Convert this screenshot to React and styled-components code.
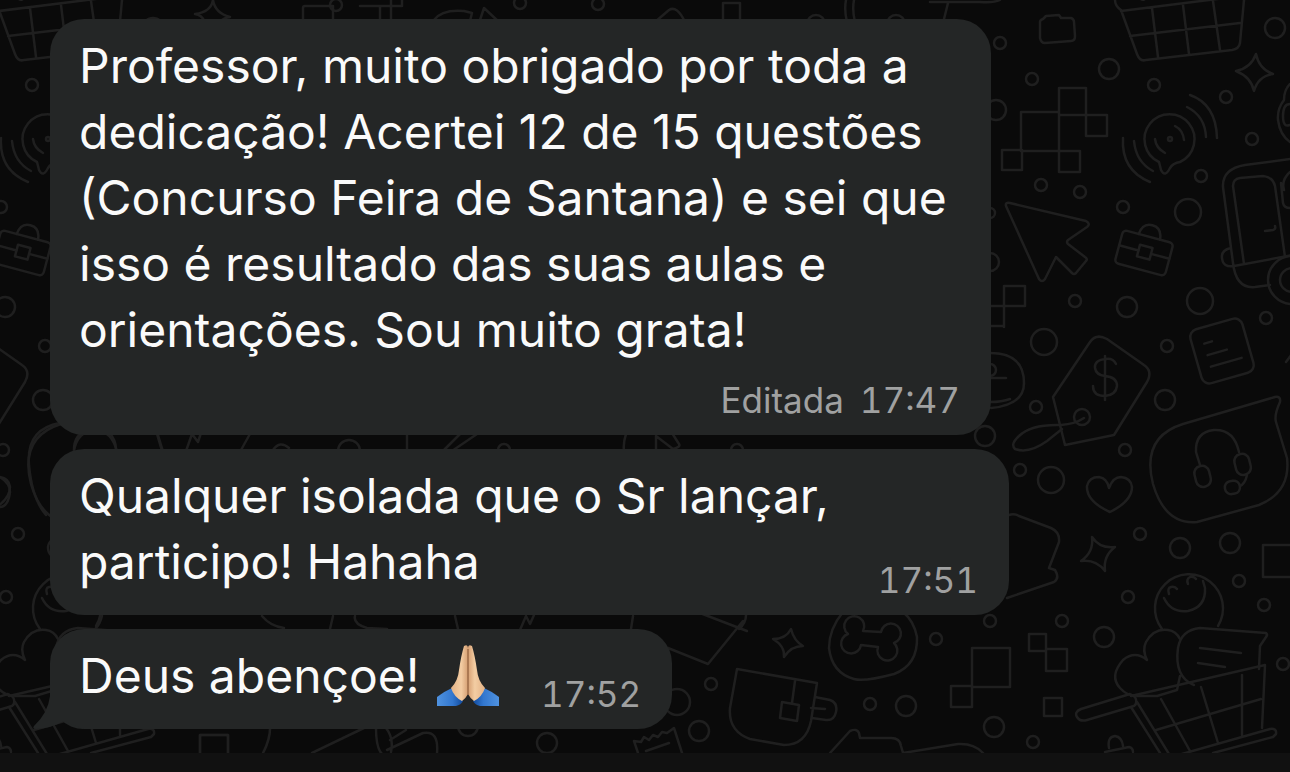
import styled, { createGlobalStyle } from "styled-components";

const GlobalStyle = createGlobalStyle`
  * {
    box-sizing: border-box;
  }

  body {
    margin: 0;
    background: #0a0a0a;
    font-family: Inter, "Liberation Sans", sans-serif;
  }
`;

const Page = styled.div`
  display: flex;
  flex-direction: column;
  min-height: 100vh;
`;

const Chat = styled.main`
  position: relative;
  flex: 1;
  padding: 19px 16px 23px 50px;
  overflow: hidden;
`;

const Wallpaper = styled.svg`
  position: absolute;
  top: 0;
  left: 0;
  fill: none;
  stroke: #1f1f1f;
  stroke-width: 2.5;
  stroke-linecap: round;
  stroke-linejoin: round;
`;

const MessageList = styled.ol`
  position: relative;
  display: flex;
  flex-direction: column;
  align-items: flex-start;
  gap: 14px;
  margin: 0;
  padding: 0;
  list-style: none;
`;

const Bubble = styled.li`
  position: relative;
  display: flex;
  flex-direction: ${({ $stacked }) => ($stacked ? "column" : "row")};
  align-items: flex-end;
  gap: ${({ $stacked }) => ($stacked ? 16 : 42)}px;
  max-width: min(100%, ${({ $max }) => $max}px);
  padding: 14px 31px 17px 29px;
  border-radius: 34px;
  background: #242626;
`;

const Text = styled.p`
  flex: 1;
  margin: 0 0 3px;
  color: #fafafa;
  font-size: 48px;
  line-height: 66px;
`;

const Meta = styled.div`
  display: flex;
  gap: 16px;
  color: #a0a1a1;
  font-size: 35px;
  font-variant-numeric: tabular-nums;
  line-height: 36px;
  white-space: nowrap;
`;

const Tail = styled.svg`
  position: absolute;
  left: -17px;
  bottom: 0;
  fill: #242626;
`;

const Emoji = styled.svg`
  margin-left: 4px;
  vertical-align: -14px;
`;

const Composer = styled.footer`
  height: 19px;
  background: #111111;
`;

const messages = [
  {
    text: "Professor, muito obrigado por toda a dedicação! Acertei 12 de 15 questões (Concurso Feira de Santana) e sei que isso é resultado das suas aulas e orientações. Sou muito grata!",
    time: "17:47",
    edited: true,
    max: 941,
  },
  {
    text: "Qualquer isolada que o Sr lançar, participo! Hahaha",
    time: "17:51",
    max: 959,
  },
  { text: "Deus abençoe!", time: "17:52", max: 959, hands: true, tail: true },
];

// [cx, cy, r]
const dots = [
  [1000, 43, 6], [1032, 79, 6], [1154, 85, 6], [1226, 97, 6], [1252, 139, 6],
  [1201, 176, 6], [1041, 185, 6], [1080, 192, 6], [1123, 207, 6],
  [1075, 301, 6], [1266, 318, 6], [1167, 346, 6], [1036, 407, 6],
  [1125, 450, 6], [1020, 470, 6], [1140, 534, 6], [1239, 581, 6],
  [1264, 605, 6], [1128, 597, 6], [990, 621, 6], [1062, 621, 6],
  [1283, 664, 6], [1033, 742, 6], [936, 639, 6], [870, 704, 6], [711, 684, 6],
  [598, 4, 6], [520, 3, 6], [336, 5, 6], [990, 213, 5], [990, 370, 6],
  [1275, 28, 10], [1109, 69, 10], [996, 110, 10], [1127, 307, 10],
  [1165, 400, 10], [985, 436, 10], [1180, 548, 10], [1230, 543, 10],
  [1104, 637, 10], [994, 727, 10], [906, 706, 10], [699, 731, 10],
  [547, 743, 10], [468, 726, 10], [990, 262, 9], [816, 24, 9], [896, 24, 9],
  [1188, 212, 13], [1200, 301, 13], [1044, 342, 13], [1051, 480, 13],
  [677, 702, 13], [349, 451, 11], [737, 450, 6], [504, 450, 6],
];

const Doodles = () => (
  <g id="doodles">
    {dots.map(([cx, cy, r]) => (
      <circle key={`${cx}-${cy}`} cx={cx} cy={cy} r={r} />
    ))}
    {/* toy brick */}
    <path d="M1040 22q0-2 3-3l2-2 1-1 13-1 2 3 10 0q3 1 3 4l1 14q0 5-4 5l-26 2q-4 0-5-5z" />
    {/* basket, top */}
    <path d="M1115 0q0 6 6 10l16 44q3 8 9 6l86-10q7-1 8-7l4-43M1121 11l120-15M1130 36l110-13M1152 8l6 49M1183 5l6 49M1213 1l7 49M1140-2q3 4 7-1M1000 0q-6 3-20 2h-50M948 3l-4 16" />
    {/* stars */}
    <path d="M1256 54q3 15 17 20q-15 2-19 17q-3-14-18-20q15-3 20-17z" />
    <path d="M1092 537q8 12 23 10q-12 9-10 24q-9-12-24-10q13-9 11-24z" />
    <path d="M791 629q3 12 12 17q-12 0-19 11q1-11-11-18q13 0 18-10z" />
    <path d="M213 0q2 13 17 17q-6 1-9 4M213 0q-2 12-18 14q7 1 9 7" />
    {/* pixel blocks */}
    <path d="M1059 88h27v27h-27zM1021 112h38v39h-38zM1086 115h21v21h-21zM1002 150h20v20h-20zM1059 151h21v21h-21zM1059 115v36" />
    <path d="M980 306h24v21M1004 286h21v20h-21zM1004 306v20h-24" />
    <path d="M972 648h38v39h-38zM951 686h21v21h-21zM1029 634h17v17h-17zM1046 649h21v22h-21zM1044 698h18v18h-18zM1263 545h40v32h-40z" />
    <path d="M200 735h28v30h-28zM303 22v-14q0-2 2-2h28v14M360 6h42V-2M380 6v14M391-2v22M723 3h17v20h-17zM1322 735h28v30h-28z" />
    <path d="M434 20q8-11 30-9l8 2-2 8M480 20l4-12 14 13M655 22l14-12q8-5 16 12M846 0q-2 10 1 22M854 0q-2 10 1 22" />
    {/* ringing speech balloon */}
    <path d="M1159 162a25 25 0 1 1 21 0q-7 1-10 6-5 10-9 2z" />
    <circle cx="1170" cy="139" r="2" />
    <path d="M1175 126q8 4 9 14M1155 139q1 9 10 14M1187 107q18 9 19 30M1190 95q26 9 27 43M1134 141q2 21 19 30M1123 138q-2 32 27 44" />
    {/* cursor */}
    <path d="M1006 206q-1-4 4-3l76 18q5 3 1 6l-19 13q-2 2 0 4l17 13q3 2 1 4l-10 12q-2 2-4 0l-16-16-11 22q-3 4-6 0z" />
    {/* briefcase */}
    <g transform="rotate(15 1144 253)">
      <rect x="1118" y="236" width="52" height="34" rx="4" />
      <path d="M1134 236q1-12 11-12t11 12M1118 252h20M1152 252h18" />
      <rect x="1138" y="246" width="13" height="12" />
    </g>
    {/* phone */}
    <path d="M1290 159l-45 6q-23 4-22 22l10 76q3 26 22 24l15-2M1293 255l-59 11M1244 264l-11-78q0-7 7-8l23-2q10 1 12 10l10 71M1284 190q-3-10 6-18M1290 208q-6 0-7-5l-2-20M1265 231l8-1q3-1 2-4M1231 248q-10 2-9 10 1 10 12 8" />
    <circle cx="1292" cy="280" r="24" />
    <circle cx="1292" cy="280" r="12" />
    <path d="M1290 84q-6 6-6 16-7 9-6 20 2 15 12 22M1290 104q-7 0-7 12t7 9" />
    {/* note */}
    <g transform="rotate(-16 1222 351)">
      <rect x="1195" y="323" width="54" height="56" rx="8" />
      <path d="M1207 339h8M1207 351h20M1207 363h32" />
    </g>
    <path d="M1286 362l6-8" />
    {/* price tag */}
    <path d="M1053 397l37-55q6-9 17-3l37 26q9 6 3 17l-33 53-49 10z" />
    <path d="M1116 364q-3-6-10-5-12 1-11 9 1 7 10 8 12 1 12 10-1 9-12 10-12 0-12-10M1105 356v44" />
    <circle cx="1082" cy="417" r="8" />
    <path d="M1084 418q-9 6-23 7-30-1-42 11-9 8-4 13 14 5 32-8l15-12" />
    <path d="M980 353h10q34 0 34 30 0 22-33 25M990 378h16M990 402q12 0 20-3" />
    {/* heart */}
    <path d="M1110 512q-24-11-23-26 2-9 12-9 8 1 10 11 4-11 12-11 10 1 11 10 0 14-22 25z" />
    {/* headset balloon */}
    <path d="M1183 424l92-27q6-1 5 5-6 13-4 20l11 36q4 34-28 47l-62 17q-32 3-44-38-12-47 30-60z" />
    <path d="M1200 465l-4-13q-1-20 18-22 20-1 25 22M1247 475q-2 9-7 11" />
    <rect x="1195" y="466" width="15" height="21" rx="7" transform="rotate(-14 1202 476)" />
    <rect x="1235" y="454" width="15" height="21" rx="7" transform="rotate(-14 1242 464)" />
    <rect x="1225" y="481" width="15" height="13" rx="6" transform="rotate(-10 1232 488)" />
    {/* puzzle piece */}
    <path d="M1009 515q5-2 10 1l32 12q9 4 8 14l-10 26 6 2q5 8-1 12l-47 16" />
    {/* smiling face, heart, cart */}
    <path d="M1162 629a34 34 0 1 1 56-3M1164 598q7 15 24 13 18-4 17-23l-2-7M1169 594q-2-6 2-7 4-1 6 2M1188 584q-2-5 2-7 4-1 6 2" />
    <path d="M1147 660q-5-10-1-18 8-14 22-12 8 1 12 9M1147 660q-12-10-24 0-14 16-3 28 7 8 17 8h20l20-6 3-14" />
    <path d="M1194 685q-20-8-16-37 3-18 22-20l66 5q2 2 0 4l-6 9-1 23M1200 648l41 5M1198 663l27 4" />
    <path d="M1131 696l134-31-3 63M1156 730l105-31M1137 702l32 52M1131 707l29 46M1161 699l29 52M1201 687l17 56M1242 675v60M1182 754l88-25q7-1 6 5l-3 3-60 16" />
    <path d="M1130 694l-49 15q-7 3-4 8 3 5 10 3l47-14q4-3 1-9zM1109 748q-2-11 6-12 7 1 8 10M1105 752l24-5q4 1 4 5" />
    {/* mug */}
    <path d="M737 669l80 14-6 38q-5 24-27 24l-34-6q-22-8-20-31zM795 681l-3 22M782 702l17 3-2 16-17-3zM815 697l15 3q8 3 6 12-2 9-10 8l-14-2M811 708l14 1" />
    {/* dog tag */}
    <path d="M843 612q-14 17-14 36 3 25 25 31 10 3 40-5 24-9 23-37-3-16-14-25" />
    <path d="M863 631l18 1a10 10 0 1 1 13 11 10 10 0 1 1-16 4l-17-2a10 10 0 1 1-13-11 10 10 0 1 1 15-3z" />
    {/* envelope corner, receipt and boot */}
    <path d="M668 648l40 16 35-43M700 613l47 18M746 615q0 8-7 14" />
    <path d="M638 753l-4-12 7 1 3-5 5 3 4-5 5 2 4-5 5 1 7-5 8 25M646 751l23-8" />
    <path d="M830 753l20-22q7-3 9 2l1 5h31q9 0 10 8l2 7 55-9q16-1 25 9" />
    <path d="M270 724q1 14-7 29M312 753l54-26M376 728q0 20 6 26M386 728q8 10 5 24M387 750l36-17q16-3 14 20M390 740l16-10" />
    {/* slivers between the bubbles */}
    <path d="M74 450q4-18 18-19M109 432q7 8 7 17M157 434l5 17M186 451l6-17 6 8 3-9M251 432l-10 18M273 450q7-10 16-2M407 434v17M444 450l18-18M452 451l25-17M626 434q-3 9-2 17M656 451v-15l17 13q8-2 6-5l-7-11" />
    <path d="M102 616q-2 8-6 12M262 616q8 10 22 12M333 616l-3 13M355 616q-2 8 12 12l20 1M455 616l3 13M520 630l6-14 4 8 4-9M633 616l-2 13" />
    <path d="M60 423q-34 6-31 42 3 34 17 50M0 477q10 6 10 15-2 15-10 15" />
  </g>
);

const PrayingHands = () => (
  <Emoji width="62" height="62" viewBox="0 0 62 62" role="img" aria-label="🙏🏼">
    <defs>
      <linearGradient id="skin" x1="0" x2="1">
        <stop offset="0" stopColor="#e3b286" />
        <stop offset=".6" stopColor="#f3cda3" />
        <stop offset="1" stopColor="#d69f72" />
      </linearGradient>
      <linearGradient id="sleeve" x1="0" x2="1">
        <stop offset="0" stopColor="#4f92df" />
        <stop offset=".6" stopColor="#3277cf" />
        <stop offset="1" stopColor="#114a9c" />
      </linearGradient>
      <g id="hand">
        <path fill="url(#sleeve)" d="M0 52q6-5 15-9l11 13q-2 4-7 5H0z" />
        <path
          fill="url(#skin)"
          d="M27 1q4-2 4 2v46q-2 4-6 7-8-4-11-13 7-7 8-18 2-14 5-24z"
        />
      </g>
    </defs>
    <use href="#hand" />
    <use href="#hand" transform="matrix(-1 0 0 1 62 0)" />
    <path stroke="#9a6844" strokeWidth="1.4" d="M31 4v46" />
  </Emoji>
);

const Message = ({ text, time, edited, max, hands, tail }) => (
  <Bubble $max={max} $stacked={edited}>
    {tail && (
      <Tail width="50" height="41" viewBox="0 0 50 41">
        <path d="M17 0v8Q15 25 1 38q-2 3 2 3 16-1 28-8l19 8V0z" />
      </Tail>
    )}
    <Text>
      {text} {hands && <PrayingHands />}
    </Text>
    <Meta>
      {edited && <span>Editada</span>}
      <time>{time}</time>
    </Meta>
  </Bubble>
);

function App() {
  return (
    <>
      <GlobalStyle />
      <Page>
        <Chat>
          <Wallpaper width="100%" height="100%" aria-hidden="true">
            <Doodles />
            <use href="#doodles" x="-1122" />
          </Wallpaper>
          <MessageList>
            {messages.map((message) => (
              <Message key={message.time} {...message} />
            ))}
          </MessageList>
        </Chat>
        <Composer />
      </Page>
    </>
  );
}

export default App;
